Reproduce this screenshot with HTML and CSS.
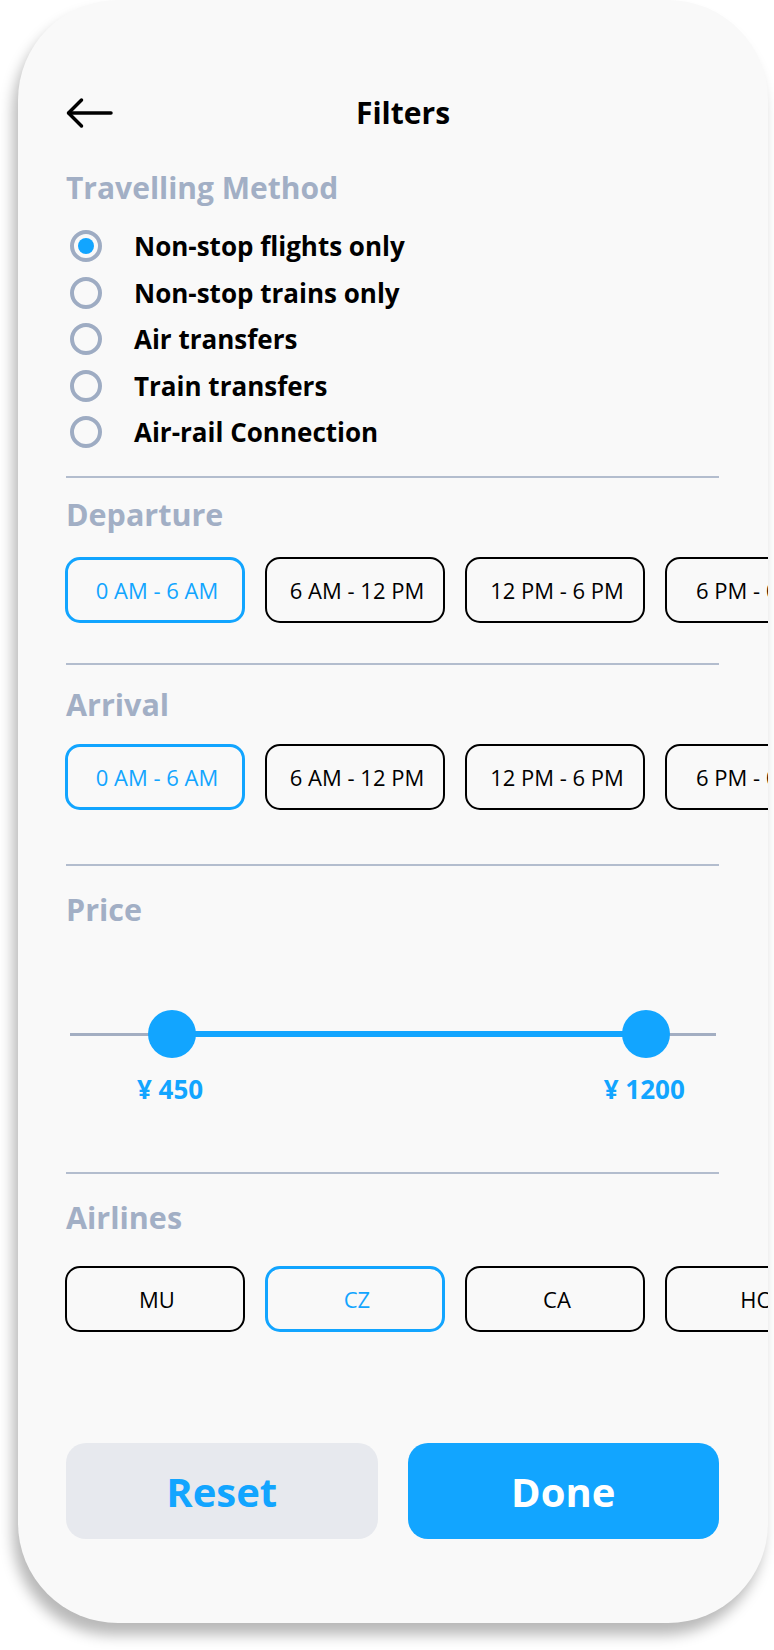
FILE: index.html
```html
<!DOCTYPE html>
<html lang="en">
<head>
<meta charset="utf-8">
<title>Filters</title>
<link rel="stylesheet" href="styles.css">
</head>
<body>
<div class="card">
  <header class="topbar">
    <svg class="back" width="48" height="32" viewBox="0 0 48 32" fill="none" stroke="#000" stroke-width="3.5" stroke-linecap="round" stroke-linejoin="round">
      <path d="M45 16H3"/>
      <path d="M15.5 3L2.5 16L15.5 29"/>
    </svg>
    <h1 class="title">Filters</h1>
  </header>

  <section class="sec sec-method">
    <h2 class="sec-title">Travelling Method</h2>
    <ul class="radios">
      <li class="radio-row"><span class="radio radio-on"></span><span class="radio-label">Non-stop flights only</span></li>
      <li class="radio-row"><span class="radio"></span><span class="radio-label">Non-stop trains only</span></li>
      <li class="radio-row"><span class="radio"></span><span class="radio-label">Air transfers</span></li>
      <li class="radio-row"><span class="radio"></span><span class="radio-label">Train transfers</span></li>
      <li class="radio-row"><span class="radio"></span><span class="radio-label">Air-rail Connection</span></li>
    </ul>
  </section>

  <hr class="divider divider-1">

  <section class="sec">
    <h2 class="sec-title title-tight">Departure</h2>
    <div class="chips">
      <span class="chip chip-on">0 AM - 6 AM</span>
      <span class="chip">6 AM - 12 PM</span>
      <span class="chip">12 PM - 6 PM</span>
      <span class="chip">6 PM - 0 AM</span>
    </div>
  </section>

  <hr class="divider divider-2">

  <section class="sec">
    <h2 class="sec-title title-arrival">Arrival</h2>
    <div class="chips chips-arrival">
      <span class="chip chip-on">0 AM - 6 AM</span>
      <span class="chip">6 AM - 12 PM</span>
      <span class="chip">12 PM - 6 PM</span>
      <span class="chip">6 PM - 0 AM</span>
    </div>
  </section>

  <hr class="divider divider-3">

  <section class="sec">
    <h2 class="sec-title title-loose">Price</h2>
    <div class="slider">
      <div class="slider-rail"></div>
      <div class="slider-fill" style="left:15.8%;width:73.4%"></div>
      <div class="knob" style="left:15.8%"><span class="knob-label">¥ 450</span></div>
      <div class="knob" style="left:89.2%"><span class="knob-label">¥ 1200</span></div>
    </div>
  </section>

  <hr class="divider divider-4">

  <section class="sec">
    <h2 class="sec-title title-loose">Airlines</h2>
    <div class="chips chips-airlines">
      <span class="chip">MU</span>
      <span class="chip chip-on">CZ</span>
      <span class="chip">CA</span>
      <span class="chip">HO</span>
    </div>
  </section>

  <footer class="actions">
    <button class="btn btn-reset">Reset</button>
    <button class="btn btn-done">Done</button>
  </footer>
</div>
</body>
</html>
```

FILE: styles.css
```css
* {
  box-sizing: border-box;
}

html, body {
  margin: 0;
  padding: 0;
  background: #ffffff;
}

body {
  font-family: "Open Sans", "Noto Sans", sans-serif;
  color: #000;
  width: 774px;
  height: 1650px;
  overflow: hidden;
}

.card {
  margin-left: 18px;
  width: 750px;
  background: #f9f9f9;
  border-radius: 100px;
  box-shadow: -5px 12px 14px rgba(0, 0, 0, 0.28);
  overflow: hidden;
  padding: 90px 49px 84px 48px;
}

/* header */
.topbar {
  display: flex;
  align-items: center;
  height: 46px;
}

.back {
  display: block;
  flex: 0 0 auto;
}

.title {
  margin: 0 0 0 242px;
  font-size: 30px;
  font-weight: 700;
  line-height: 46px;
}

/* sections */
.sec {
  margin: 0;
}

.sec-title {
  margin: 0;
  font-size: 30.5px;
  font-weight: 700;
  line-height: 40px;
  color: #a2afc5;
}

.sec-method .sec-title {
  margin-top: 32px;
  font-size: 30px;
}

.title-tight {
  margin-top: 16px;
}

.title-arrival {
  margin-top: 19px;
}

.title-loose {
  margin-top: 22.5px;
}

/* radios */
.radios {
  list-style: none;
  margin: 15px 0 0;
  padding: 0;
}

.radio-row {
  display: flex;
  align-items: center;
  height: 46.5px;
}

.radio {
  flex: 0 0 32px;
  width: 32px;
  height: 32px;
  margin-left: 4px;
  border: 4px solid #9eacc3;
  border-radius: 50%;
  display: flex;
  align-items: center;
  justify-content: center;
}

.radio-on::after {
  content: "";
  width: 16px;
  height: 16px;
  border-radius: 50%;
  background: #12a5ff;
}

.radio-label {
  margin-left: 32px;
  font-size: 26px;
  font-weight: 700;
}

/* dividers */
.divider {
  border: 0;
  height: 2px;
  background: #b3bdce;
  margin: 0;
}

.divider-1 { margin-top: 20.5px; }
.divider-2 { margin-top: 40px; }
.divider-3 { margin-top: 54px; }
.divider-4 { margin-top: 66px; }

/* chips */
.chips {
  display: flex;
  gap: 20px;
  margin-top: 23px;
  margin-left: -1px;
}

.chips-arrival {
  margin-top: 20px;
}

.chips-airlines {
  margin-top: 29.5px;
}

.chip {
  flex: 0 0 180px;
  height: 66px;
  border: 2px solid #000;
  border-radius: 15px;
  display: flex;
  align-items: center;
  justify-content: center;
  padding-left: 4px;
  font-size: 22px;
  color: #000;
  white-space: nowrap;
  overflow: hidden;
}

.chip-on {
  border: 3px solid #12a5ff;
  color: #12a5ff;
}

/* slider */
.slider {
  position: relative;
  height: 96px;
  margin: 81.5px 3px 0 4px;
}

.slider-rail {
  position: absolute;
  left: 0;
  right: 0;
  top: 23px;
  height: 2.5px;
  background: #a3aec2;
}

.slider-fill {
  position: absolute;
  top: 21px;
  height: 6px;
  background: #12a5ff;
}

.knob {
  position: absolute;
  top: 0;
  width: 48px;
  height: 48px;
  margin-left: -24px;
  border-radius: 50%;
  background: #12a5ff;
}

.knob-label {
  position: absolute;
  top: 63px;
  left: 50%;
  transform: translateX(calc(-50% - 2px));
  font-size: 26px;
  font-weight: 700;
  line-height: 32px;
  color: #12a5ff;
  white-space: nowrap;
}

/* actions */
.actions {
  display: flex;
  gap: 30px;
  margin-top: 111px;
}

.btn {
  flex: 1 1 0;
  height: 96px;
  border: 0;
  border-radius: 20px;
  font-family: "Open Sans", "Noto Sans", sans-serif;
  font-size: 40px;
  font-weight: 700;
  display: flex;
  align-items: center;
  justify-content: center;
  padding: 0;
}

.btn-reset {
  background: #e7e9ee;
  color: #12a5ff;
}

.btn-done {
  background: #12a5ff;
  color: #ffffff;
}
```
